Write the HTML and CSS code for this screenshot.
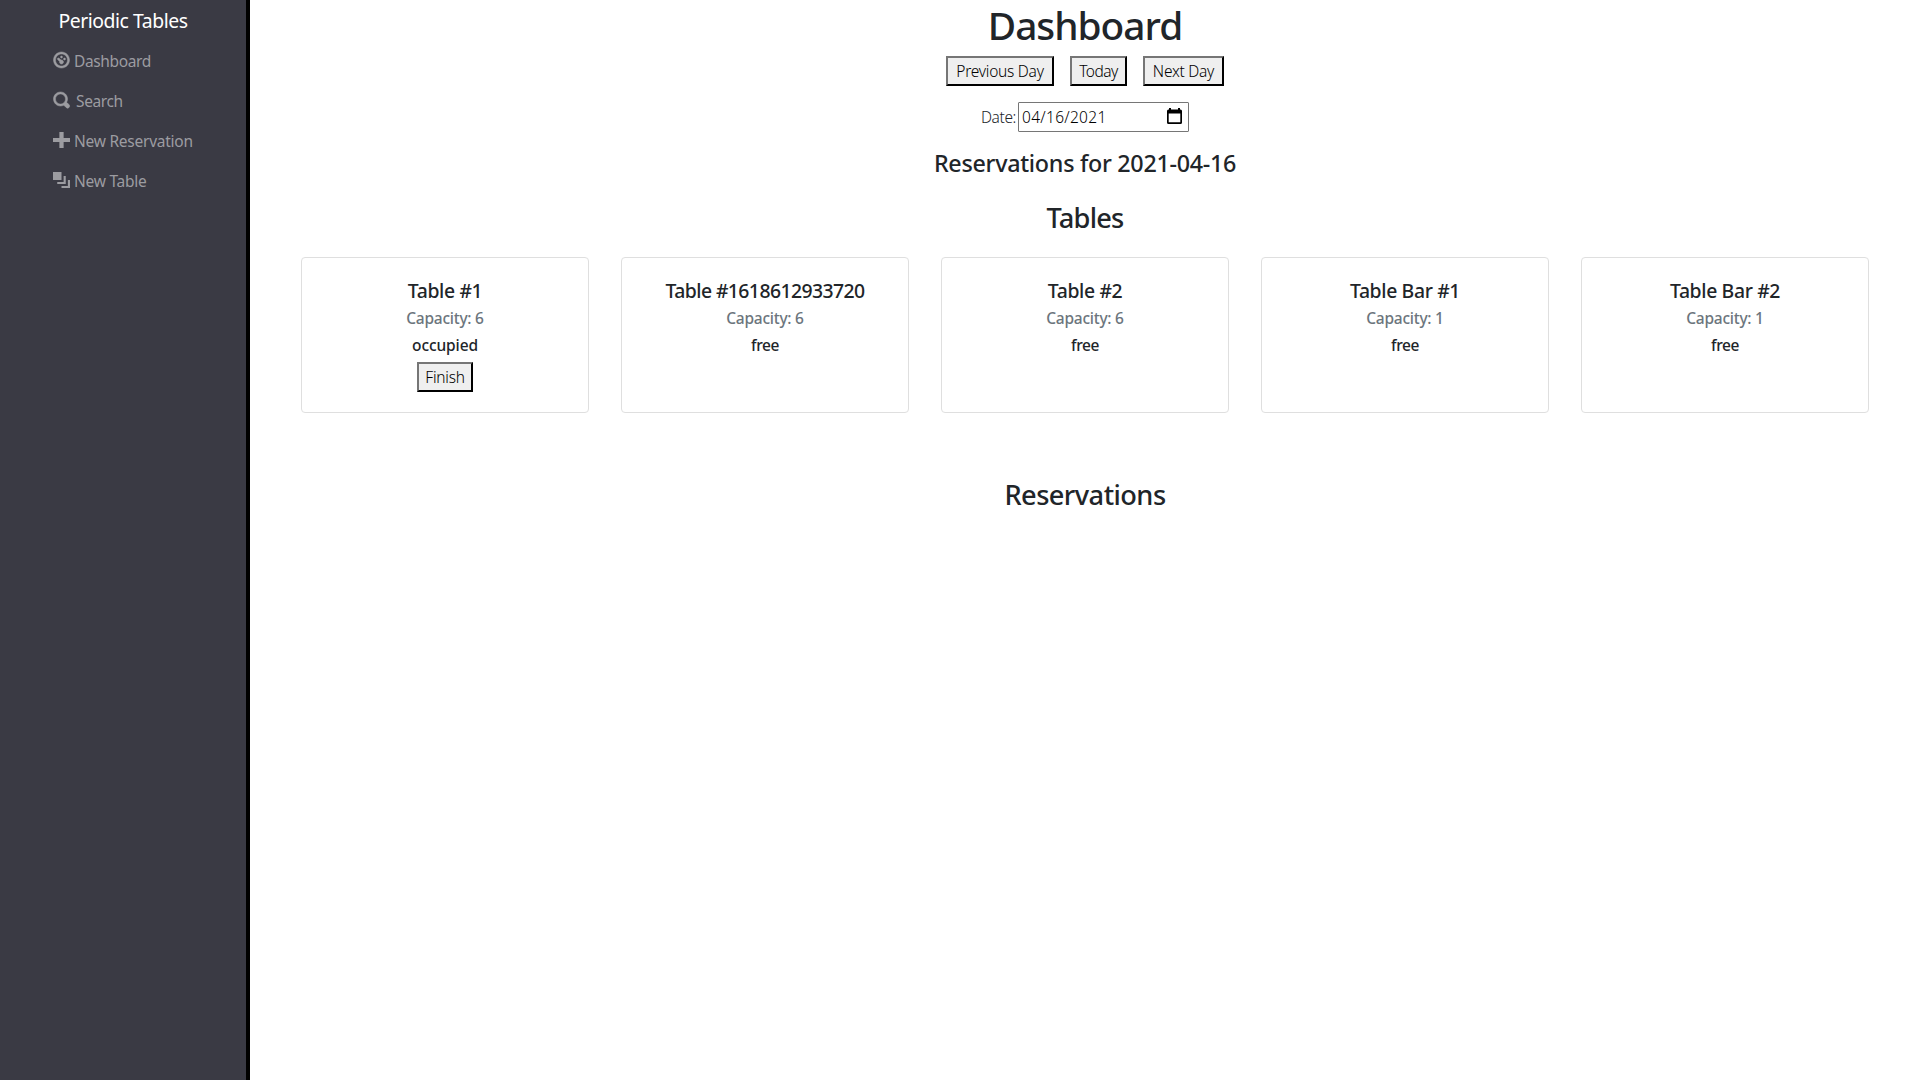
FILE: index.html
```
<!DOCTYPE html>
<html lang="en">
<head>
<meta charset="utf-8">
<title>Periodic Tables</title>
<link rel="stylesheet" href="styles.css">
</head>
<body>
<nav class="sidebar">
  <a class="brand">Periodic Tables</a>
  <ul class="menu">
    <li class="item"><svg class="icon bold" viewBox="0 0 8 8"><path d="M4 0c-2.2 0-4 1.8-4 4s1.8 4 4 4 4-1.8 4-4-1.8-4-4-4zm0 1c1.66 0 3 1.34 3 3s-1.34 3-3 3-3-1.34-3-3 1.34-3 3-3zm0 1c-.28 0-.5.22-.5.5s.22.5.5.5.5-.22.5-.5-.22-.5-.5-.5zm-1.66 1a.5.5 0 0 0-.19.84l.91.91c-.02.08-.06.16-.06.25 0 .55.45 1 1 1s1-.45 1-1-.45-1-1-1c-.09 0-.17.04-.25.06l-.91-.91a.5.5 0 0 0-.44-.16.5.5 0 0 0-.06 0zm3.16 0c-.28 0-.5.22-.5.5s.22.5.5.5.5-.22.5-.5-.22-.5-.5-.5z"/></svg><span class="label tight">Dashboard</span></li>
    <li class="item"><svg class="icon bold" viewBox="0 0 8 8"><path d="M3.5 0c-1.93 0-3.5 1.57-3.5 3.5s1.57 3.5 3.5 3.5c.59 0 1.17-.14 1.66-.41a1 1 0 0 0 .13.13l1 1a1.02 1.02 0 1 0 1.44-1.44l-1-1a1 1 0 0 0-.16-.13c.27-.49.44-1.06.44-1.66 0-1.93-1.55-3.5-3.5-3.5zm0 1c1.39 0 2.5 1.11 2.5 2.5 0 .66-.24 1.27-.66 1.72-.01.01-.02.02-.03.03a1 1 0 0 0-.13.13c-.44.4-1.04.63-1.69.63-1.39 0-2.5-1.11-2.5-2.5s1.11-2.5 2.5-2.5z"/></svg><span class="label tight search">Search</span></li>
    <li class="item"><svg class="icon" viewBox="0 0 8 8" preserveAspectRatio="none"><path d="M3 0v3h-3v2h3v3h2v-3h3v-2h-3v-3h-2z"/></svg><span class="label">New Reservation</span></li>
    <li class="item"><svg class="icon" viewBox="0 0 8 8" preserveAspectRatio="none"><path d="M0 0v4h4v-4h-4zm5 2v3h-3v1h4v-4h-1zm2 2v3h-3v1h4v-4h-1z"/></svg><span class="label">New Table</span></li>
  </ul>
</nav>
<main class="content">
  <h1 class="title">Dashboard</h1>
  <div class="days">
    <button class="btn previous">Previous Day</button>
    <button class="btn today">Today</button>
    <button class="btn next">Next Day</button>
  </div>
  <div class="date-row">
    <span class="date-label">Date:</span>
    <div class="date-field">
      <span>04/16/2021</span>
      <svg class="calendar" viewBox="0 0 15 16"><path fill-rule="evenodd" d="M2 0h2v1.500h7V0h2v1.500h.5q1.500 0 1.500 1.500v11.500q0 1.500-1.500 1.500h-12Q0 16 0 14.500V3q0-1.500 1.500-1.500H2zM1.700 5.500v8.800h11.600V5.500z"/></svg>
    </div>
  </div>
  <h4 class="subtitle">Reservations for 2021-04-16</h4>
  <h3 class="section tables">Tables</h3>
  <div class="cards">
    <div class="card"><h5 class="name">Table #1</h5><h6 class="capacity">Capacity: 6</h6><h6 class="status">occupied</h6><button class="btn finish">Finish</button></div>
    <div class="card"><h5 class="name long">Table #1618612933720</h5><h6 class="capacity">Capacity: 6</h6><h6 class="status free">free</h6></div>
    <div class="card"><h5 class="name">Table #2</h5><h6 class="capacity">Capacity: 6</h6><h6 class="status free">free</h6></div>
    <div class="card"><h5 class="name">Table Bar #1</h5><h6 class="capacity">Capacity: 1</h6><h6 class="status free">free</h6></div>
    <div class="card"><h5 class="name">Table Bar #2</h5><h6 class="capacity">Capacity: 1</h6><h6 class="status free">free</h6></div>
  </div>
  <h3 class="section">Reservations</h3>
</main>
</body>
</html>
```
FILE: styles.css
```
* { box-sizing: border-box; margin: 0; padding: 0; }
body {
  display: flex;
  min-height: 100vh;
  font: 15.5px/24px "Noto Sans", sans-serif;
  color: #212529;
  background: #fff;
}
h1, h3, h4, h5, h6 { font-weight: 500; white-space: nowrap; }

.sidebar {
  flex: none;
  width: 250px;
  background: #3a3a44;
  border-right: 4px solid #000;
}
.brand {
  display: block;
  height: 41px;
  text-align: center;
  font-size: 19.4px;
  line-height: 41px;
  letter-spacing: -.46px;
  color: #fff;
}
.menu { list-style: none; padding-left: 53px; }
.item { display: flex; align-items: center; height: 40px; color: #9c9ca1; }
.icon { width: 17px; height: 16px; margin-bottom: 2px; fill: currentColor; overflow: visible; }
.bold { stroke: currentColor; stroke-width: .25px; }
.label { margin-left: 4px; letter-spacing: -.25px; line-height: 40px; }
.tight { letter-spacing: -.38px; }
.search { margin-left: 6px; }

.content {
  flex: 1;
  display: flex;
  flex-direction: column;
  align-items: center;
  padding: 0 35px;
}
.title { font-size: 38.8px; font-weight: 550; line-height: 50px; letter-spacing: -1px; }
.days { display: flex; gap: 16px; margin-top: 6px; }
.btn {
  height: 30px;
  border: 2px outset #767676;
  border-color: #767676 #212121 #212121 #767676;
  background: #efefef;
  font: inherit;
  font-weight: 350;
  line-height: 26px;
  letter-spacing: -.25px;
  color: #000;
}
.previous { width: 108px; }
.today { width: 57px; letter-spacing: -.5px; }
.next { width: 81px; }
.date-row { display: flex; margin-top: 16px; line-height: 30px; font-weight: 350; }
.date-label { width: 37px; letter-spacing: -.4px; }
.date-field {
  display: flex;
  justify-content: space-between;
  align-items: center;
  width: 171px;
  height: 30px;
  padding: 0 6px 0 3px;
  border: 1px solid #767676;
  border-radius: 1px;
  letter-spacing: .3px;
  color: #000;
}
.calendar { width: 15px; height: 16px; margin-bottom: 2px; }
.subtitle { margin-top: 16px; font-size: 23.3px; line-height: 30px; letter-spacing: -.28px; }
.section { font-size: 27.2px; line-height: 34px; letter-spacing: -.54px; }
.tables { margin-top: 23px; letter-spacing: -.75px; }
.cards {
  display: grid;
  grid-template-columns: repeat(5, 1fr);
  width: 100%;
  margin: 22px 0 65px;
}
.card {
  display: flex;
  flex-direction: column;
  align-items: center;
  height: 156px;
  margin: 0 16px;
  padding-top: 21px;
  border: 1px solid #dfdfdf;
  border-radius: 4px;
}
.name { font-size: 19.4px; line-height: 24px; letter-spacing: -.36px; }
.long { letter-spacing: -.59px; }
.capacity { margin-top: 4px; font-size: 15.5px; font-weight: 550; line-height: 23px; letter-spacing: -.25px; color: #6c757d; }
.status { margin-top: 4px; font-size: 15.5px; line-height: 23px; letter-spacing: -.1px; }
.free { letter-spacing: -.4px; }
.finish { width: 56px; margin-top: 5px; }
```
